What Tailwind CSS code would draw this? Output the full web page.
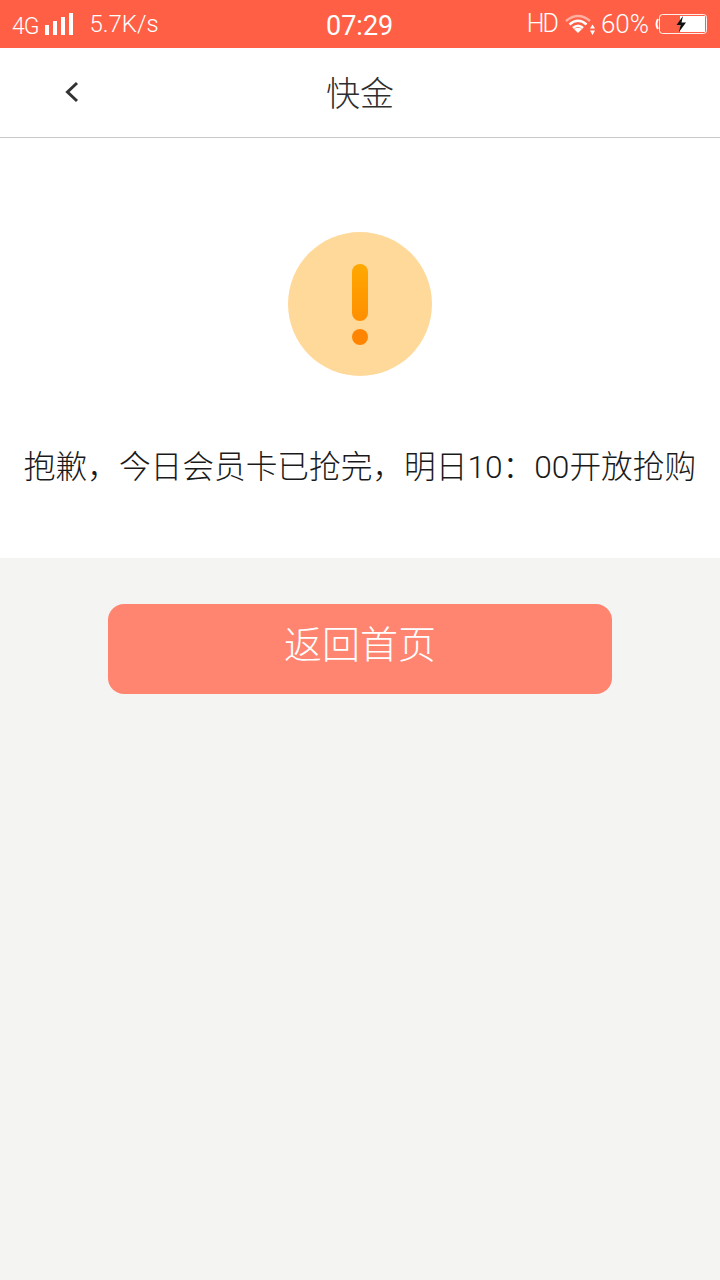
<!DOCTYPE html>
<html lang="zh">
<head>
<meta charset="utf-8">
<script src="https://cdn.jsdelivr.net/npm/@tailwindcss/browser@4"></script>
</head>
<body class="m-0">
<div class="w-[720px] h-[1280px] flex flex-col bg-[#f4f4f2] font-['Roboto','Noto_Sans_CJK_SC',sans-serif] overflow-hidden">
  <div class="relative h-[48px] bg-[#ff5f45] text-white flex items-center justify-between shrink-0">
    <div class="flex items-center pl-[12px]">
      <span class="text-[23px] leading-none tracking-[-1px] mt-[5px] font-light">4G</span>
      <svg class="ml-[6px]" width="29" height="24" viewBox="0 0 29 24"><rect x="0" y="13" width="4" height="10" fill="#fff"/><rect x="8" y="9" width="4" height="14" fill="#fff"/><rect x="16" y="5" width="4" height="18" fill="#fff"/><rect x="24" y="1" width="4" height="22" fill="#fff"/></svg>
      <span class="ml-[16px] text-[24px] leading-none font-light">5.7K/s</span>
    </div>
    <span class="absolute left-[326px] top-[11px] text-[27px] leading-[30px]">07:29</span>
    <div class="flex items-center pr-[12px]">
      <span class="text-[25px] leading-none font-light tracking-[-2px] mt-[-1px]">HD</span>
      <svg class="ml-[8px]" width="30" height="24" viewBox="0 0 30 24" fill="none"><path d="M1 9Q13 -1 25 9" stroke="#fff" stroke-opacity=".5" stroke-width="2.5"/><path d="M4.500 12.500Q13 5 21.500 12.500" stroke="#fff" stroke-width="2.500"/><path d="M8 16Q13 11.500 18 16" stroke="#fff" stroke-width="2.500"/><path d="M13 21L9 17Q13 14.500 17 17Z" fill="#fff"/><path d="M25 16.500L27.500 12.500L30 16.500ZM25 18.500L27.500 23L30 18.500Z" fill="#fff"/></svg>
      <span class="ml-[6px] text-[26px] leading-none font-light">60%</span>
      <svg class="ml-[6px]" width="53" height="22" viewBox="0 0 53 22" fill="none"><path d="M3 6Q0 11 3 16" stroke="#fff" stroke-width="2"/><rect x="4.500" y="1.500" width="47" height="19" rx="3" fill="#ff5f45" stroke="#fff" stroke-opacity=".9"/><rect x="25" y="3" width="25" height="16" fill="#fff"/><path d="M28 3L21.500 12H25.500L24 19L31 9.500H26.500Z" fill="#111"/></svg>
    </div>
  </div>
  <div class="relative h-[90px] bg-white border-b border-[#c8c8c8] flex items-center justify-center shrink-0">
    <svg class="absolute left-[64px] top-[33px]" width="16" height="22" viewBox="0 0 16 22" fill="none"><path d="M13 2L3.500 11L13 20" stroke="#333" stroke-width="3"/></svg>
    <span class="text-[34px] leading-[44px] mt-[3px] text-[#2e2e2e] font-light">快金</span>
  </div>
  <div class="h-[420px] bg-white flex flex-col items-center shrink-0">
    <div class="mt-[94px] w-[144px] h-[144px] rounded-full bg-[#ffd99a] flex flex-col items-center">
      <div class="mt-[32px] w-[16px] h-[57px] rounded-full bg-gradient-to-b from-[#ffa800] to-[#ff8f00]"></div>
      <div class="mt-[8px] w-[16px] h-[16px] rounded-full bg-[#ff8400]"></div>
    </div>
    <p class="mt-[70px] text-[31.700px] leading-[44px] text-[#1a1a1a] whitespace-nowrap font-light">抱歉，今日会员卡已抢完，明日10：00开放抢购</p>
  </div>
  <div class="flex justify-center pt-[46px]">
    <button class="w-[504px] h-[90px] rounded-[16px] bg-[#ff8571] text-white text-[38px] leading-[82px] pb-[8px] font-light">返回首页</button>
  </div>
</div>
</body>
</html>
